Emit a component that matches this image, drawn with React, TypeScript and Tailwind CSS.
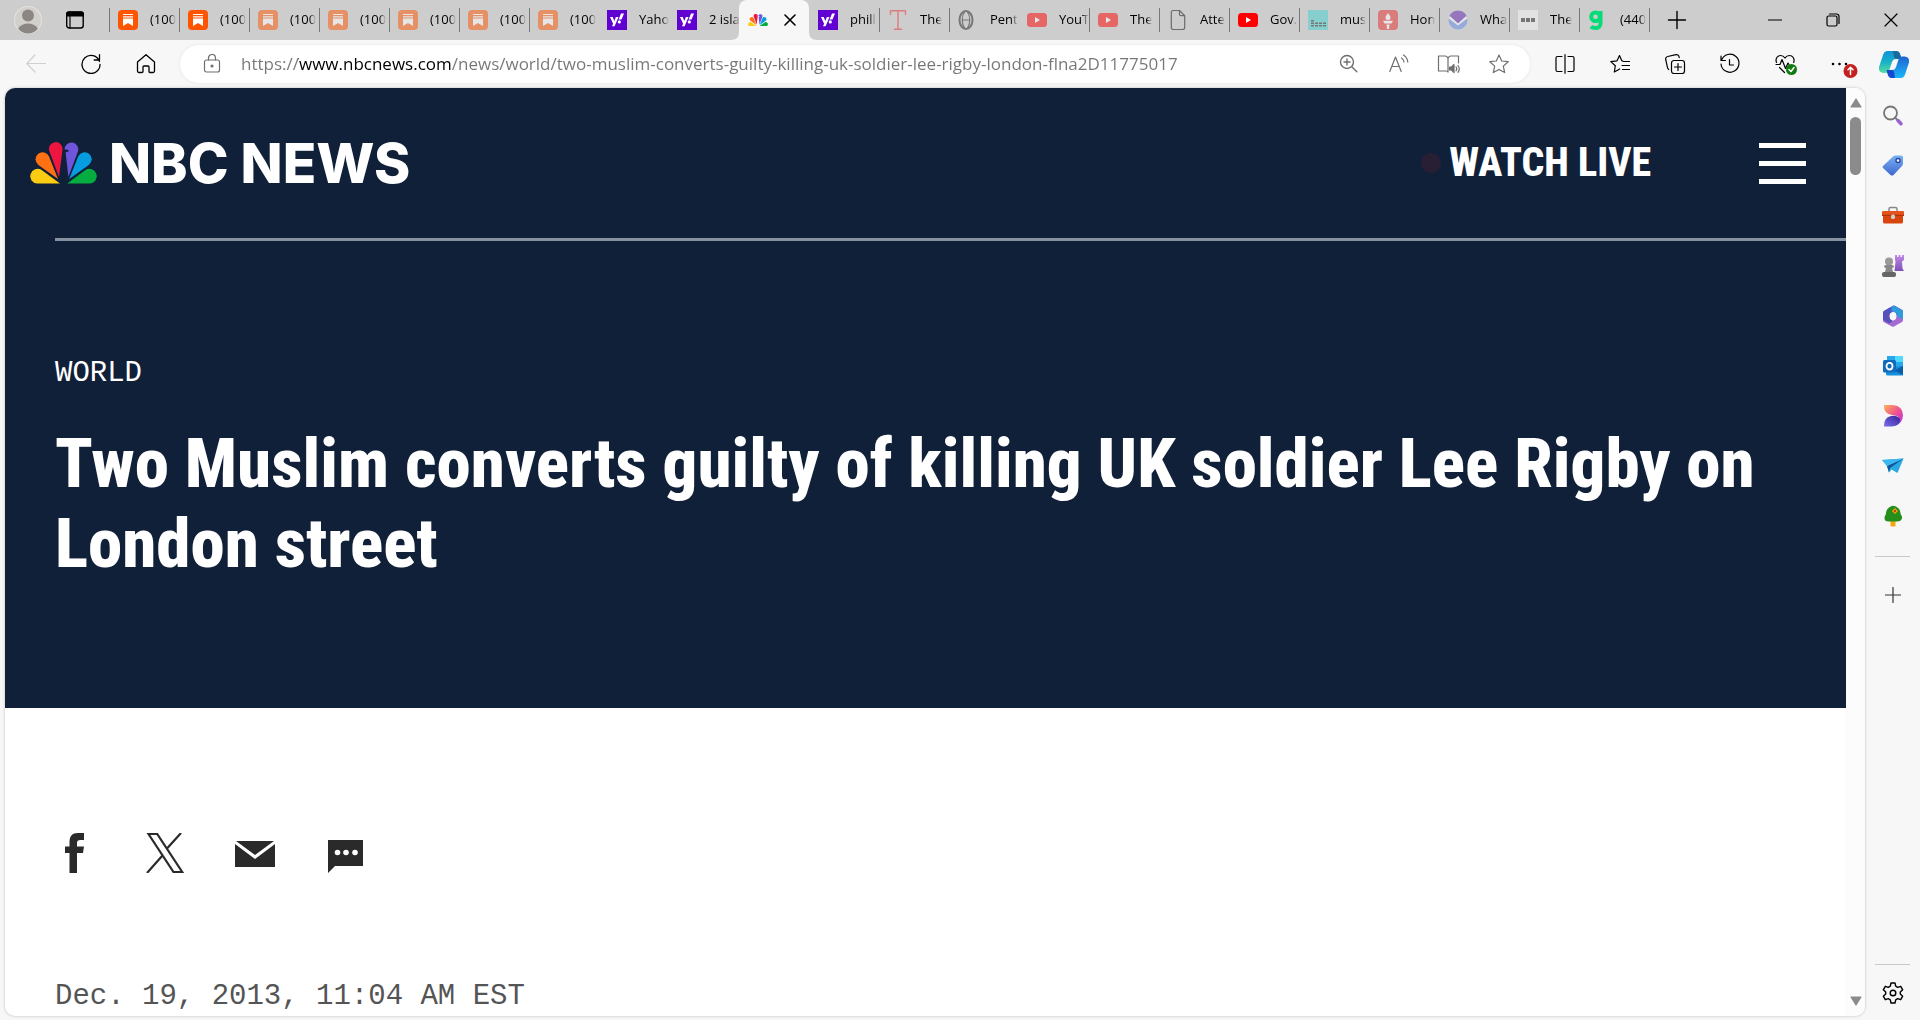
import React, { ReactNode } from "react";

type IconProps = { children: ReactNode; box?: string; className?: string };

function Icon({ children, box = "0 0 20 20", className = "size-5" }: IconProps) {
  return (
    <svg
      viewBox={box}
      className={`shrink-0 ${className}`}
      fill="none"
      stroke="currentColor"
      strokeWidth="1.2"
      strokeLinecap="round"
      strokeLinejoin="round"
      aria-hidden="true"
    >
      {children}
    </svg>
  );
}

// Peacock, shared by the site header and the active tab
function Peacock({ className }: { className: string }) {
  return (
    <Icon box="0 0 67 42" className={className}>
      <g stroke="none">
        <path fill="#fccc12" d="M30 41.5H7.3A7.3 7.3 0 1 1 11.6 28.1Z" />
        <path fill="#ff7112" d="M28 37L8.4 22.9A7 7 0 1 1 19 14.6Z" />
        <path fill="#ef1541" d="M29 35L19.4 9.3A6.8 6.8 0 1 1 32.5 7.8Z" />
        <path fill="#6e55dc" d="M38.4 35L48 9.3A6.8 6.8 0 1 0 34.7 7.6H37L39.4 9L35.6 10.5Z" />
        <path fill="#069de0" d="M39.2 37L58.8 22.9A7 7 0 1 0 48.2 14.6Z" />
        <path fill="#05ac3f" d="M37.2 41.5H59.7A7.3 7.3 0 1 0 55.4 28.1Z" />
      </g>
    </Icon>
  );
}

function Substack() {
  return (
    <Icon>
      <g stroke="none">
        <rect width="20" height="20" rx="4" fill="#ff5500" />
        <path fill="#fff" d="M5 4h10v1H5zM5 6.2h10v1.2H5zM5 8.6h10V16l-5-3-5 3z" />
      </g>
    </Icon>
  );
}

function Yahoo() {
  return (
    <Icon>
      <g stroke="none">
        <rect width="20" height="20" fill="#6001d2" />
        <path fill="#fff" d="M3 7h2.700l1.600 3.900L8.900 7h2.600L7.600 16.300H5l1.100-2.500z" />
        <path fill="#fff" d="M14 3.500h3l-2.500 6h-2.900z" />
        <circle cx="12.300" cy="11.900" r="1.600" fill="#fff" />
      </g>
    </Icon>
  );
}

function Youtube() {
  return (
    <Icon>
      <rect y="3" width="20" height="14" rx="3.500" fill="#f00" stroke="none" />
      <path d="M8 7v6l5-3z" fill="#fff" stroke="none" />
    </Icon>
  );
}

const tabs: { title: string; icon: ReactNode; faded?: boolean; active?: boolean }[] = [
  { title: "(100", icon: <Substack /> },
  { title: "(100", icon: <Substack /> },
  { title: "(100", icon: <Substack />, faded: true },
  { title: "(100", icon: <Substack />, faded: true },
  { title: "(100", icon: <Substack />, faded: true },
  { title: "(100", icon: <Substack />, faded: true },
  { title: "(100", icon: <Substack />, faded: true },
  { title: "Yaho", icon: <Yahoo /> },
  { title: "2 isla", icon: <Yahoo /> },
  { title: "", icon: <Peacock className="w-5" />, active: true },
  { title: "phill", icon: <Yahoo /> },
  {
    title: "The",
    faded: true,
    icon: (
      <Icon>
        <path d="M2.500 4.500V.700h15v3.800M10 .700v18.600M6.500 19.300h7" stroke="#f0302f" strokeWidth="1.400" />
      </Icon>
    ),
  },
  {
    title: "Pent",
    faded: true,
    icon: (
      <Icon>
        <ellipse cx="8" cy="10" rx="6.500" ry="9" stroke="#222" strokeWidth="2" />
        <path d="M4.500 10h7M6.500 2c-3 4-3 12 0 16M9.500 2c3 4 3 12 0 16" stroke="#222" />
      </Icon>
    ),
  },
  { title: "YouT", icon: <Youtube />, faded: true },
  { title: "The", icon: <Youtube />, faded: true },
  {
    title: "Atte",
    icon: (
      <Icon>
        <path
          d="M3.300 2.500a2 2 0 0 1 2-2h6.200l5.200 5.200v11.800a2 2 0 0 1-2 2H5.300a2 2 0 0 1-2-2zM11.500.500v3.700a1.500 1.500 0 0 0 1.500 1.500h3.700"
          stroke="#6b6b6b"
        />
      </Icon>
    ),
  },
  { title: "Gov.", icon: <Youtube /> },
  {
    title: "mus",
    faded: true,
    icon: (
      <Icon>
        <g stroke="none">
          <rect width="20" height="20" fill="#44cfd2" />
          <path
            fill="#222"
            d="M3 15h3v1.500H3zM3 12.500h3V14H3zM3 10h3v1.500H3zM7 15h3v1.500H7zM7 12.500h3V14H7zM11 15h3v1.500h-3zM15 15h3v1.500h-3zM15 12.500h3V14h-3zM11 12.500h3V14h-3z"
          />
        </g>
      </Icon>
    ),
  },
  {
    title: "Hon",
    faded: true,
    icon: (
      <Icon>
        <g stroke="none">
          <rect width="20" height="20" rx="4" fill="#e92d2d" />
          <path fill="#fff" d="M10 2.500c0 2 2.500 2.500 2.500 5A2.500 2.500 0 0 1 10 10a2.500 2.500 0 0 1-2.500-2.500c0-2.500 2.500-3 2.500-5zM5 10.700h10l-1.500 2.800h-7zM8.500 14.500h3L11 19H9z" />
        </g>
      </Icon>
    ),
  },
  {
    title: "Wha",
    faded: true,
    icon: (
      <Icon>
        <g stroke="none">
          <circle cx="10" cy="10" r="9.500" fill="#638be8" />
          <path fill="#6022ad" d="M1.500 6a9.500 9.500 0 0 1 17 0L10 14z" />
          <path d="M.800 8.500L10 15.500l9.200-7-1-2.500L10 13.500 1.800 6z" fill="#fff" />
        </g>
      </Icon>
    ),
  },
  {
    title: "The",
    faded: true,
    icon: (
      <Icon>
        <path fill="#f8f8f8" stroke="none" d="M0 0h20v20H0z" />
        <path fill="#222" stroke="none" d="M3 8h4v4H3zM8 8h4v4H8zM13 8h4v4h-4z" />
      </Icon>
    ),
  },
  {
    title: "(440",
    icon: (
      <Icon>
        <circle cx="7.500" cy="6.800" r="4.300" stroke="#05dc79" strokeWidth="4" />
        <path d="M12.500 1v12.500c0 3-2.500 4.500-5 4.500-2 0-3.500-.500-4.500-1.500" stroke="#05dc79" strokeWidth="4" strokeLinecap="butt" />
      </Icon>
    ),
  },
];

const tools: { label: string; icon: ReactNode }[] = [
  {
    label: "Split screen",
    icon: <path d="M10 .700v18.600M7 2.500H2.500a1.500 1.500 0 0 0-1.500 1.500v12a1.500 1.500 0 0 0 1.500 1.500H7M13 2.500h4.500A1.500 1.500 0 0 1 19 4v12a1.500 1.500 0 0 1-1.500 1.500H13" />,
  },
  {
    label: "Favorites",
    icon: (
      <>
        <path d="M13 7.200L11.700 6.500 9.500 1.500 7 6.800.800 7.600l4.500 4.200-1 6.200L9.700 15" />
        <path d="M13.500 7.500h6M12 11.500h7.500M12.500 15.500h7" />
      </>
    ),
  },
  {
    label: "Collections",
    icon: (
      <>
        <rect x="6.500" y="6.500" width="13" height="13" rx="2.500" />
        <path d="M13 9.500v7M9.500 13h7M3.800 15.500a2.500 2.500 0 0 1-1.300-1.800L.700 5.500a2.500 2.500 0 0 1 2-3L11 .700a2.500 2.500 0 0 1 3 2l.200 1" />
      </>
    ),
  },
  {
    label: "History",
    icon: <path d="M1 2v4.500h4.500M1.500 6.200A9 9 0 1 1 1 10M9.500 5.500v5.500h4" />,
  },
  {
    label: "Browser essentials",
    icon: (
      <>
        <path d="M1.500 8.500C0 4.500 2.500 1.500 5.500 1.500c2 0 3.500 1 4.500 2.500 1-1.500 2.500-2.500 4.500-2.500 3 0 5.500 3 4.200 7M4.500 13.500l5 5" />
        <path d="M1 10.500h4l2-5 3.500 9 2.500-5.500 1 1.500" />
        <circle cx="16.500" cy="15.500" r="5.500" fill="#107c10" stroke="none" />
        <path d="M14 15.500l2 2 3-4" stroke="#fff" strokeWidth="1.500" />
      </>
    ),
  },
  {
    label: "Settings and more",
    icon: (
      <>
        <path d="M3 10h.010M9.500 10h.010M16 10h.010" strokeWidth="2.600" />
        <circle cx="20.500" cy="17" r="7" fill="#c42020" stroke="none" />
        <path d="M20.500 20.500v-7M18 15.800l2.500-2.500 2.500 2.500" stroke="#fff" strokeWidth="1.500" />
      </>
    ),
  },
];

const addressTools: { label: string; icon: ReactNode }[] = [
  { label: "Zoom", icon: <path d="M8 1.500a6.500 6.500 0 1 1 0 13 6.500 6.500 0 0 1 0-13zM12.800 12.800l5 5M8 5v6M5 8h6" strokeWidth="1.400" /> },
  { label: "Read aloud", icon: <path d="M.800 17.500L6.500 3 12.200 17.500M3 12.500h7M12.500 4c1.500 1 2.300 2.500 2.500 4M14.500 1c2.300 1.500 4 4 4.300 7" /> },
  {
    label: "Immersive reader",
    icon: (
      <>
        <path d="M9 4.500C8.500 2.800 7.500 2 6 2H-.500v15H7c1 0 1.800.500 2 1.200V4.500C9.500 2.800 10.500 2 12 2h7.500v7" />
        <path d="M10.500 13v3h2l2.500 2.500v-8L12.500 13z" fill="currentColor" />
        <path d="M17 12.800c.800 1 .800 3 0 4M19 11.500c1.500 2 1.500 4.800 0 6.800" />
      </>
    ),
  },
  { label: "Add to favorites", icon: <path d="M10 1l2.700 6 6.500.700-4.900 4.400 1.400 6.500L10 15.400l-5.700 3.200 1.400-6.500L.800 7.700 7.300 7z" /> },
];

const sidebarApps: { label: string; icon: ReactNode }[] = [
  {
    label: "Search",
    icon: (
      <>
        <circle cx="8.500" cy="8" r="6.500" stroke="#777" strokeWidth="1.800" />
        <path d="M13 12.500l3 3" stroke="#777" strokeWidth="1.800" />
        <path d="M16 15.500l3 3.200" stroke="#9a63cf" strokeWidth="3.500" />
      </>
    ),
  },
  {
    label: "Shopping",
    icon: (
      <g stroke="none">
        <path d="M1 11L11 1.500Q12 .500 13.500.500H19q2 0 2 2v6q0 1.500-1 2.500l-8.500 9q-1.500 1.200-3 0L1 13q-1-1 0-2z" fill="url(#tag)" />
        <circle cx="16" cy="5.500" r="2" fill="#fff" stroke="#27459a" strokeWidth="1.400" />
      </g>
    ),
  },
  {
    label: "Tools",
    icon: (
      <g stroke="none">
        <path d="M7 6V4q0-1.500 1.500-1.500h5Q15 2.500 15 4v2" fill="none" stroke="#888" strokeWidth="1.500" />
        <rect y="6" width="22" height="5" rx="1" fill="#e4551d" />
        <path d="M1 10.500h20V17a1.500 1.500 0 0 1-1.500 1.500h-17A1.500 1.500 0 0 1 1 17z" fill="#d8450d" />
        <path d="M0 10.300h22" stroke="#b53004" />
        <rect x="9" y="9.500" width="4" height="4.500" rx="1.500" fill="#ccc" />
      </g>
    ),
  },
  {
    label: "Games",
    icon: (
      <g stroke="none">
        <path d="M13 0h2v2h1.500V0h2v2H20V0h2v5l-2 1.500.500 7 1.500 2.500h-9.500l1-9.500L13 5z" fill="url(#rook)" />
        <circle cx="7" cy="6.500" r="4" fill="#999" />
        <path d="M2 11.500Q2 10 4 10h6q2 0 2 1.500 0 1.300-2 1.500l1 4H3l1-4q-2-.200-2-1.500z" fill="#888" />
        <rect y="17" width="14" height="5" rx="2" fill="#666" />
      </g>
    ),
  },
  {
    label: "Microsoft 365",
    icon: (
      <g stroke="none">
        <path d="M7 3l4-2.200q1-.500 2 0l7 4q1 .700 1 2v8l-7-4V8l-3-1.500-3.500 2.800V16L1 12.500V8q0-1.500 1-2z" fill="#3d62d8" />
        <path d="M1 12v3.500q0 1.200 1 1.800l8 4.200q1 .500 2 0l8-4.500q1-.700 1-2v-1l-7-3.500v3.500l-3.500 2L7 14z" fill="#a66bd3" />
        <path d="M11.500.500l8.500 4.500q1 .700 1 2v7.500l-6.500-4V8L9 5z" fill="#319bdc" />
        <path d="M1 8q0-1.500 1-2l6-3.500V14l3 2-4 2.500-6-3.500z" fill="#5951bb" />
        <circle cx="11" cy="11" r="3.500" fill="#f7f7f7" />
      </g>
    ),
  },
  {
    label: "Outlook",
    icon: (
      <g stroke="none">
        <path d="M5 1h14.500q1.500 0 1.500 1.500V12H5z" fill="#28a8ea" />
        <path d="M13 1h7q1 0 1 1v5h-8z" fill="#50d9ff" />
        <path d="M4 12l17-1v9.500H5.500Q4 20.500 4 19z" fill="#1490df" />
        <path d="M21 11v9L12 15.500z" fill="#0a5ea8" />
        <rect x="1" y="5" width="13" height="12.500" rx="1.500" fill="#0f6cbd" />
        <ellipse cx="7.500" cy="11.200" rx="3" ry="3.300" fill="none" stroke="#fff" strokeWidth="1.800" />
      </g>
    ),
  },
  {
    label: "Designer",
    icon: (
      <g stroke="none">
        <path d="M2 0h9q10 1 10 10.500Q20.500 18 14 20q5-5 2-8.500Q12 10 8 9.500 1.500 8 2 0z" fill="url(#petal)" />
        <path d="M2 21.500Q1.500 12.500 9 11q6-1 9 3 1 7-8 7.500z" fill="url(#petalDark)" />
      </g>
    ),
  },
  {
    label: "Drop",
    icon: (
      <g stroke="none">
        <path d="M0 5L21.500 3.500 15.500 18 9.500 14.500 7 17.500 5 11z" fill="#29a8e3" />
        <path d="M21.500 3.500L5 11l2 6.500 1-4.500z" fill="#125494" />
        <path d="M21.500 3.500L0 5l5 6z" fill="#3cb8ef" />
      </g>
    ),
  },
  {
    label: "Tree",
    icon: (
      <g stroke="none">
        <path d="M8.500 15h5v6q-2.500 1-5 0z" fill="#f5a50c" />
        <path d="M7 2.500Q11-1 15.500 2.500 19 5 18.500 9q2.500 3 1 5.500-1 2-4 2H6.500q-4 0-4-3.500 0-2 1.500-4Q3.500 5 7 2.500z" fill="#268f1c" />
        <path d="M13 3l1.500 1.500L16 6l-1.500 1.500L13 9l-1.500-1.500L10 6l1.500-1.500z" fill="#f9a800" />
        <circle cx="13" cy="6" r="1.200" fill="#c23b08" />
      </g>
    ),
  },
];

const shares: { label: string; icon: ReactNode }[] = [
  { label: "Share on Facebook", icon: <path d="M14.500 40V20H10v-6.500h4.500V9c0-6 3-9 8-9H29v7h-3.500c-2.500 0-3.500 1-3.500 3v3.500h7L28 20h-6v20z" fill="currentColor" stroke="none" /> },
  {
    label: "Share on X",
    icon: <path d="M3.500 1h8.700l25 38h-8.700zM36 0L22 15.500M17.500 22.500L2 40" strokeWidth="2.200" strokeLinecap="butt" strokeLinejoin="miter" />,
  },
  {
    label: "Share by email",
    icon: (
      <g fill="currentColor" stroke="none">
        <path d="M1 8h38L20 22z" />
        <path d="M0 11l20 15 20-15v23H0z" />
      </g>
    ),
  },
  {
    label: "Share by text message",
    icon: (
      <>
        <path d="M3 7h35v26H10l-7 7z" fill="currentColor" stroke="none" />
        <g fill="#fff" stroke="none">
          <circle cx="12.500" cy="19.500" r="2.800" />
          <circle cx="21" cy="19.500" r="2.800" />
          <circle cx="30" cy="19.500" r="2.800" />
        </g>
      </>
    ),
  },
];

function TabStrip() {
  return (
    <div className="flex h-10 items-end bg-[#cdcdcd]">
      <div className="flex h-10 w-[109px] shrink-0 items-center gap-[23px] pl-[14px]">
        <button aria-label="Profile">
          <Icon box="0 0 28 28" className="size-7">
            <circle cx="14" cy="14" r="13.500" fill="#d2d0cb" stroke="#e4e1da" />
            <circle cx="14" cy="9.500" r="6" fill="#8b8683" stroke="none" />
            <path d="M4 22.500Q8 17.500 14 17.500t10 5Q20 27.500 14 27.500T4 22.500z" fill="#8b8683" stroke="none" />
          </Icon>
        </button>
        <button aria-label="Tab actions">
          <Icon>
            <rect x="1.700" y="2" width="16.500" height="16" rx="2.500" strokeWidth="1.400" />
            <path d="M1 6.500V4q0-2.500 2.500-2.500h13Q19 1.500 19 4v2.500z" fill="#000" stroke="none" />
            <path d="M5 6v12" />
          </Icon>
        </button>
      </div>
      {tabs.map((tab, i) =>
        tab.active ? (
          <div key={i} className="relative z-10 flex h-10 w-[70px] items-center justify-between rounded-t-lg bg-[#f7f7f7] pr-[13px] pl-[9px]">
            <Icon box="0 0 8 8" className="absolute bottom-0 -left-2 size-2">
              <path d="M8 0v8H0q8 0 8-8z" fill="#f7f7f7" stroke="none" />
            </Icon>
            {tab.icon}
            <button aria-label="Close tab">
              <Icon box="0 0 12 12" className="size-3">
                <path d="M1 1l10 10M11 1L1 11" strokeWidth="1.600" />
              </Icon>
            </button>
            <Icon box="0 0 8 8" className="absolute -right-2 bottom-0 size-2">
              <path d="M0 0v8h8Q0 8 0 0z" fill="#f7f7f7" stroke="none" />
            </Icon>
          </div>
        ) : (
          <button key={i} className="flex h-10 w-[70px] items-center">
            <span className={tabs[i - 1]?.active ? "h-6 w-px" : "h-6 w-px bg-[#777]"} />
            <span className={tab.faded ? "ml-2 opacity-50" : "ml-2"}>{tab.icon}</span>
            <span className="ml-3 mask-r-from-75% text-left text-[13px] whitespace-nowrap">{tab.title}</span>
          </button>
        )
      )}
      <span className="mb-2 h-6 w-px bg-[#777]" />
      <button aria-label="New tab" className="flex h-10 w-[54px] items-center justify-center">
        <Icon>
          <path d="M10 1.500v17M1.500 10h17" strokeWidth="1.400" />
        </Icon>
      </button>
      <div className="ml-auto flex">
        <button aria-label="Minimize" className="flex h-10 w-[58px] items-center justify-center">
          <Icon box="0 0 14 14" className="size-[14px]">
            <path d="M0 7h14" />
          </Icon>
        </button>
        <button aria-label="Restore" className="flex h-10 w-[58px] items-center justify-center">
          <Icon box="0 0 14 14" className="size-[14px]">
            <rect x="1" y="3" width="10" height="10" rx="1.500" />
            <path d="M3.500 1h7A2.500 2.500 0 0 1 13 3.500v7" />
          </Icon>
        </button>
        <button aria-label="Close" className="flex h-10 w-[58px] items-center justify-center">
          <Icon box="0 0 14 14" className="size-[14px]">
            <path d="M1 1l12 12M13 1L1 13" />
          </Icon>
        </button>
      </div>
    </div>
  );
}

function Toolbar() {
  return (
    <div className="flex h-12 items-center pl-2">
      <button aria-label="Back" className="flex w-[55px] justify-center text-[#d0d0d0]" disabled>
        <Icon>
          <path d="M19.500 9.500H1M9 1L.800 9.500 9 18" />
        </Icon>
      </button>
      <button aria-label="Refresh" className="flex w-[55px] justify-center">
        <Icon>
          <path d="M18.500 7.500A9 9 0 1 0 19 10.500M18.500.700V6h-5.300" strokeWidth="1.300" />
        </Icon>
      </button>
      <button aria-label="Home" className="flex w-[55px] justify-center">
        <Icon>
          <path d="M1.500 8L10 .700 18.500 8v9a1.500 1.500 0 0 1-1.500 1.500h-3a1 1 0 0 1-1-1V13a1 1 0 0 0-1-1H8a1 1 0 0 0-1 1v4.500a1 1 0 0 1-1 1H3A1.500 1.500 0 0 1 1.500 17z" strokeWidth="1.300" />
        </Icon>
      </button>
      <div className="mx-[7px] flex h-[38px] flex-1 items-center rounded-full bg-white pr-[6px] pl-[22px] text-[#6f6f6f] shadow-[0_0_3px_#e2e2e2]">
        <Icon>
          <rect x="2.500" y="6" width="15" height="12" rx="2" />
          <path d="M6.500 6V4a3.500 3.500 0 0 1 7 0v2" />
          <circle cx="10" cy="12" r="1" fill="currentColor" />
        </Icon>
        <input
          type="text"
          aria-label="Address"
          defaultValue="https://www.nbcnews.com/news/world/two-muslim-converts-guilty-killing-uk-soldier-lee-rigby-london-flna2D11775017"
          className="ml-[19px] min-w-0 flex-1 bg-[linear-gradient(90deg,#767676_57px,#000_57px,#000_210px,#767676_210px)] bg-clip-text text-[17px] leading-6 text-transparent outline-none"
        />
        {addressTools.map((tool) => (
          <button key={tool.label} aria-label={tool.label} className="flex w-[50px] justify-center">
            <Icon className="size-5 overflow-visible">{tool.icon}</Icon>
          </button>
        ))}
      </div>
      {tools.map((tool) => (
        <button key={tool.label} aria-label={tool.label} className="flex w-[55px] justify-center">
          <Icon className="size-5 overflow-visible">{tool.icon}</Icon>
        </button>
      ))}
      <button aria-label="Copilot" className="flex w-[53px] justify-center">
        <Icon box="0 0 30 27" className="h-[27px] w-[30px]">
          <g stroke="none">
            <path d="M8 0h9q3 0 4 3l1.500 5H17q-3 0-4 3l-3 9q-1 2-3 2H4q-5-1-4-6L4 4Q5 .500 8 0z" fill="url(#copilotLeft)" />
            <path d="M14 0h3q3 0 4 3l1.500 5H17q-1.500 0-2-2z" fill="#1a6a9c" />
            <path d="M22 27h-9q-3 0-4-3l-1.500-5H13q3 0 4-3l3-9q1-1.500 3-1.500h3q5 1 4 6l-4 12q-1 3.200-4 3.500z" fill="url(#copilotRight)" />
            <path d="M16 27h-3q-3 0-4-3l-1.500-5H13q1.500 0 2 2z" fill="#1746d0" />
          </g>
        </Icon>
      </button>
    </div>
  );
}

function Sidebar() {
  return (
    <aside className="flex w-[55px] shrink-0 flex-col items-center pt-[3px]">
      {sidebarApps.map((app) => (
        <button key={app.label} aria-label={app.label} className="flex h-[50px] items-center">
          <Icon box="0 0 22 22" className="size-[22px]">
            {app.icon}
          </Icon>
        </button>
      ))}
      <hr className="mt-[15px] w-[35px] border-[#c8c8c8]" />
      <button aria-label="Customize" className="mt-[30px] text-[#333]">
        <Icon box="0 0 16 16" className="size-4">
          <path d="M8 .500v15M.500 8h15" />
        </Icon>
      </button>
      <hr className="mt-auto w-[35px] border-[#c8c8c8]" />
      <button aria-label="Settings" className="flex h-[55px] items-center">
        <Icon box="0 0 22 22" className="size-[22px]">
          <path
            d="M9 1h4l.700 3.200 2 1.100 3-1 2 3.500L18.300 10v2l2.400 2.200-2 3.500-3-1-2 1.100L13 21H9l-.700-3.200-2-1.100-3 1-2-3.500L3.700 12v-2L1.300 7.800l2-3.500 3 1 2-1.100z"
            strokeWidth="1.400"
          />
          <circle cx="11" cy="11" r="2.800" strokeWidth="1.400" />
        </Icon>
      </button>
    </aside>
  );
}

function Article() {
  return (
    <div className="min-w-0 flex-1">
      <header className="bg-[#112039] pb-[120px] text-white">
        <div className="flex h-[150px] items-center pr-10 pl-[25px]">
          <a href="#home" className="flex items-center gap-3">
            <Peacock className="h-[42px] w-[67px]" />
            <span className="font-[Inter] text-[55px] leading-none font-extrabold">NBC NEWS</span>
          </a>
          <a href="#live" className="ml-auto flex items-center gap-2">
            <span className="size-5 rounded-full bg-[#281f35]" />
            <span className="font-['Roboto_Condensed',Roboto,sans-serif] text-[40px] leading-none font-extrabold">WATCH LIVE</span>
          </a>
          <button aria-label="Menu" className="ml-[108px] flex w-[47px] flex-col gap-[13px]">
            <span className="h-[5px] bg-white" />
            <span className="h-[5px] bg-white" />
            <span className="h-[5px] bg-white" />
          </button>
        </div>
        <hr className="ml-[50px] border-t-[3px] border-[#8891a1]" />
        <div className="px-[50px] pt-[117px]">
          <a href="#world" className="block font-['Liberation_Mono',monospace] text-[29px] leading-8">
            WORLD
          </a>
          <h1 className="mt-[34px] mb-[4px] font-['Roboto_Condensed',Roboto,sans-serif] text-[69px] leading-[80px] font-extrabold">
            Two Muslim converts guilty of killing UK soldier Lee Rigby on London street
          </h1>
        </div>
      </header>
      <div className="px-[50px] pt-[125px]">
        <div className="flex gap-[50px]">
          {shares.map((share) => (
            <button key={share.label} aria-label={share.label} className="text-[#2a2a2a]">
              <Icon box="0 0 40 40" className="size-10">
                {share.icon}
              </Icon>
            </button>
          ))}
        </div>
        <time className="mt-[108px] block font-['Liberation_Mono',monospace] text-[29px] leading-8 text-[#555]">Dec. 19, 2013, 11:04 AM EST</time>
      </div>
    </div>
  );
}

export default function App() {
  return (
    <div className="flex h-screen flex-col overflow-hidden bg-[#f7f7f7] font-['Open_Sans',sans-serif] text-black">
      <svg className="absolute size-0" aria-hidden="true">
        <defs>
          <linearGradient id="tag" x1="0" y1="0" x2="0" y2="1">
            <stop stopColor="#78b0f5" />
            <stop offset="1" stopColor="#4168cf" />
          </linearGradient>
          <linearGradient id="rook" x1="0" y1="0" x2="0" y2="1">
            <stop stopColor="#c08bea" />
            <stop offset="1" stopColor="#7f50b5" />
          </linearGradient>
          <linearGradient id="petal" x1="0" y1="0" x2="1" y2="1">
            <stop stopColor="#ffb057" />
            <stop offset=".5" stopColor="#f0548c" />
            <stop offset="1" stopColor="#b42df0" />
          </linearGradient>
          <linearGradient id="petalDark" x1="0" y1="1" x2="1" y2="0">
            <stop stopColor="#7a6ff0" />
            <stop offset="1" stopColor="#332291" />
          </linearGradient>
          <linearGradient id="copilotLeft" x1="0" y1="0" x2="0" y2="1">
            <stop stopColor="#1292d8" />
            <stop offset=".5" stopColor="#18b0c8" />
            <stop offset="1" stopColor="#5adf9c" />
          </linearGradient>
          <linearGradient id="copilotRight" x1="0" y1="0" x2="0" y2="1">
            <stop stopColor="#2063cf" />
            <stop offset="1" stopColor="#19b7fa" />
          </linearGradient>
        </defs>
      </svg>
      <TabStrip />
      <Toolbar />
      <div className="flex min-h-0 flex-1">
        <main className="mb-1 ml-[5px] flex min-w-0 flex-1 overflow-hidden rounded-[10px] bg-white shadow-[0_0_3px_#bbb]">
          <Article />
          {/* Scrollbar */}
          <div className="flex w-[19px] flex-col items-center bg-[#fcfcfc] py-[10px] text-[#8b8b8b]">
            <Icon box="0 0 12 10" className="h-[10px] w-3">
              <path d="M6 1l5 8H1z" fill="currentColor" />
            </Icon>
            <span className="mt-[9px] h-[58px] w-[11px] rounded-full bg-[#8b8b8b]" />
            <Icon box="0 0 12 10" className="mt-auto h-[10px] w-3">
              <path d="M6 9L1 1h10z" fill="currentColor" />
            </Icon>
          </div>
        </main>
        <Sidebar />
      </div>
    </div>
  );
}
